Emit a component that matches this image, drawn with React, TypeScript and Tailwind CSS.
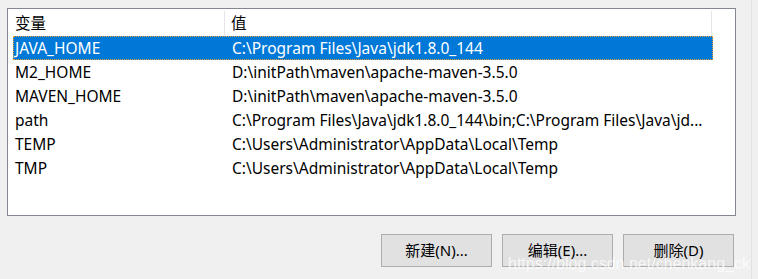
import React from 'react';

type EnvVar = { name: string; value: string };

const vars: EnvVar[] = [
  { name: 'JAVA_HOME', value: 'C:\\Program Files\\Java\\jdk1.8.0_144' },
  { name: 'M2_HOME', value: 'D:\\initPath\\maven\\apache-maven-3.5.0' },
  { name: 'MAVEN_HOME', value: 'D:\\initPath\\maven\\apache-maven-3.5.0' },
  { name: 'path', value: 'C:\\Program Files\\Java\\jdk1.8.0_144\\bin;C:\\Program Files\\Java\\jd...' },
  { name: 'TEMP', value: 'C:\\Users\\Administrator\\AppData\\Local\\Temp' },
  { name: 'TMP', value: 'C:\\Users\\Administrator\\AppData\\Local\\Temp' },
];

const font = { fontFamily: '"Noto Sans", "Noto Sans CJK SC", sans-serif' };

const Button: React.FC<{ label: string }> = ({ label }) => (
  <button className="w-[111px] h-[33px] bg-[#e1e1e1] border border-[#adadad] text-[15px] text-black leading-none">
    {label}
  </button>
);

const App: React.FC = () => {
  const selected = 0;

  return (
    <div className="relative w-[758px] h-[279px] bg-[#f0f0f0] overflow-hidden text-[15.5px] text-black" style={font}>
      <div className="flex h-full">
        <div className="w-[751px] flex flex-col pl-[7px] pt-[8px]">
          <div className="w-[729px] h-[208px] bg-white border border-[#828790] px-[5px]">
            <div className="flex h-[27px] items-center">
              <div className="w-[212px] h-[25px] mt-[2px] pl-[2px] flex items-center border-r border-[#e5e5e5]">变量</div>
              <div className="w-[487px] h-[25px] mt-[2px] pl-[6px] flex items-center border-r border-[#e5e5e5]">值</div>
            </div>
            <div className="w-[700px]">
              {vars.map((v, i) => (
                <div
                  key={v.name}
                  className={`flex h-[24px] items-center pt-[2px] ${
                    i === selected ? 'bg-[#0078d7] text-white outline-1 outline-dotted outline-[#f0a030] -outline-offset-1' : ''
                  }`}
                >
                  <div className="w-[219px] pl-[2px] whitespace-nowrap">{v.name}</div>
                  <div className="flex-1 whitespace-nowrap overflow-hidden">{v.value}</div>
                </div>
              ))}
            </div>
          </div>
          <div className="flex gap-[10px] pl-[374px] pt-[18px]">
            <Button label="新建(N)..." />
            <Button label="编辑(E)..." />
            <Button label="删除(D)" />
          </div>
        </div>
        <div className="w-px h-full bg-[#e3e3e3]" />
      </div>
      <div
        className="absolute left-[508px] top-[252px] text-[16px] text-white/75 whitespace-nowrap"
        style={{ fontFamily: '"Liberation Sans", Arial, sans-serif' }}
      >
        https://blog.csdn.net/chenkang_ck
      </div>
    </div>
  );
};

export default App;
